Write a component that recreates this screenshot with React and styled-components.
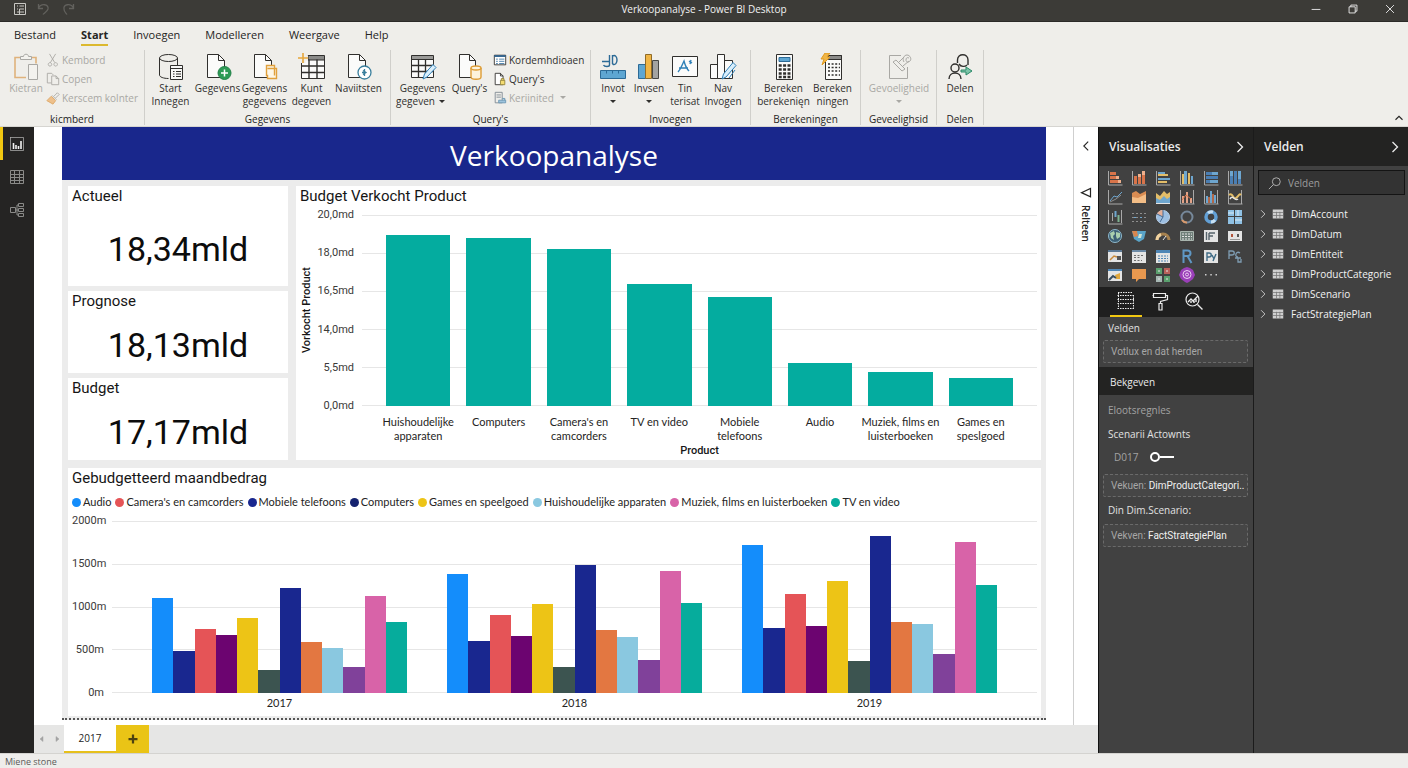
import React from "react";
import styled, { createGlobalStyle } from "styled-components";

const ui = `"Open Sans", "Noto Sans", sans-serif`;
const din = `Roboto, "Liberation Sans", sans-serif`;
const chartFont = `Lato, "Open Sans", sans-serif`;

const products = [
  { name: "Huishoudelijke apparaten", value: 89.7 },
  { name: "Computers", value: 87.9 },
  { name: "Camera's en camcorders", value: 82.1 },
  { name: "TV en video", value: 63.9 },
  { name: "Mobiele telefoons", value: 57.3 },
  { name: "Audio", value: 22.7 },
  { name: "Muziek, films en luisterboeken", value: 17.7 },
  { name: "Games en speslgoed", value: 14.5 },
];

const seriesColors = [
  "#148dfb",
  "#19278f",
  "#e55457",
  "#6c0470",
  "#edc416",
  "#3c5450",
  "#19278f",
  "#e37741",
  "#8ac8e0",
  "#80419a",
  "#d863a8",
  "#06ac9c",
];

const years = [
  {
    year: "2017",
    values: [55.5, 24.7, 37.2, 34, 43.6, 13.4, 60.8, 29.7, 26.2, 15.1, 56.4, 41],
  },
  {
    year: "2018",
    values: [69.2, 30.3, 45.4, 33.4, 51.8, 15.1, 74.4, 36.4, 32.3, 19.2, 71, 52.4],
  },
  {
    year: "2019",
    values: [85.8, 37.6, 57.6, 39, 64.9, 18.9, 91.3, 41.3, 40.4, 22.7, 87.8, 62.8],
  },
];

const legend = [
  { name: "Audio", color: "#148dfb" },
  { name: "Camera's en camcorders", color: "#e55457" },
  { name: "Mobiele telefoons", color: "#19278f" },
  { name: "Computers", color: "#14226f" },
  { name: "Games en speelgoed", color: "#edc416" },
  { name: "Huishoudelijke apparaten", color: "#8ac8e0" },
  { name: "Muziek, films en luisterboeken", color: "#d863a8" },
  { name: "TV en video", color: "#06ac9c" },
];

const tables = [
  "DimAccount",
  "DimDatum",
  "DimEntiteit",
  "DimProductCategorie",
  "DimScenario",
  "FactStrategiePlan",
];

/* ---------- icons ---------- */

const Icon = ({ size = 16, box = 16, children }) => (
  <svg
    width={size}
    height={size}
    viewBox={`0 0 ${box} ${box}`}
    fill="none"
    stroke="currentColor"
    aria-hidden="true"
  >
    {children}
  </svg>
);

const Chevron = ({ dir, size = 16 }) => (
  <Icon size={size}>
    <path
      strokeWidth="1.3"
      d={
        {
          left: "M10.5 3 5.5 8l5 5",
          right: "M5.5 3l5 5-5 5",
          up: "M4 10l4-4 4 4",
        }[dir]
      }
    />
  </Icon>
);

const ribbonIcons = {
  paste: (
    <>
      <path stroke="#dfb27c" strokeWidth="1.6" d="M8 4.500H3v20h11M20 4.500h4v6" />
      <path stroke="#a9a8a4" d="M8.500 6.500v-3h3c0-3 5-3 5 0h3v3zM16.500 11.500h9v15h-9z" fill="#f3f2ee" />
    </>
  ),
  database: (
    <>
      <path d="M2.500 5v17c0 2 4 3.500 9 3.500M20.500 5v7" />
      <ellipse cx="11.500" cy="5" rx="9" ry="3.500" />
      <path fill="#f8f8f6" d="M13.500 12.500h12v14h-12z" />
      <path d="M13.500 15.500h12M16 18.500h1.500M19 18.500h5M16 21h1.500M19 21h5M16 23.500h1.500M19 23.500h5" />
    </>
  ),
  pagePlus: (
    <>
      <path fill="#fbfbfa" d="M3.500 1.500h11l6 6v17h-17z" />
      <path d="M14.500 1.500v6h6" />
      <circle cx="20.500" cy="20" r="6.500" fill="#2d9a55" stroke="#23834a" />
      <path stroke="#fff" strokeWidth="1.500" d="M20.500 16.500v7M17 20h7" />
    </>
  ),
  pageCopy: (
    <>
      <path fill="#fbfbfa" d="M3.500 1.500h11l6 6v17h-17z" />
      <path d="M14.500 1.500v6h6" />
      <path stroke="#e0a03c" strokeWidth="1.400" fill="#fdf6e6" d="M15.500 12.500h8v3h2v10h-9v-3h-1zM16.500 15.500h7v7" />
    </>
  ),
  gridPlus: (
    <>
      <path fill="#fbfbfa" d="M3.500 6.500h23v19h-23z" />
      <path fill="#8b8b89" d="M10 2.500h16.500V7H10z" />
      <path d="M3.500 13h23M3.500 19.500h23M11 6.500v19M19 6.500v19" strokeWidth="1.400" />
      <path stroke="#f0eeea" strokeWidth="5" d="M5 0v10M0 5h10" />
      <path stroke="#e5a63b" strokeWidth="1.600" d="M5 0v10M0 5h10" />
    </>
  ),
  pageClock: (
    <>
      <path fill="#fbfbfa" d="M3.500 1.500h11l6 6v17h-17z" />
      <path d="M14.500 1.500v6h6" />
      <circle cx="19.500" cy="19.500" r="6.500" fill="#fff" stroke="#3a7f9d" strokeWidth="1.300" />
      <path stroke="#3a7f9d" strokeWidth="1.300" d="M19.500 16v7M17 19.500h4M18 17.500l3 2-3 2" />
    </>
  ),
  gridEdit: (
    <>
      <path fill="#fbfbfa" d="M2.500 3.500h22v21h-22z" />
      <path fill="#9a9a98" d="M2.500 2.500h22v4h-22z" />
      <path d="M2.500 12.500h22M2.500 18.500h22M9.500 6.500v18M16.500 6.500v18" strokeWidth="1.300" />
      <path fill="#d9eefb" stroke="#2f80b7" d="M14 26l1.500-5L24 11.500l3 3-9 9.500z" />
    </>
  ),
  pageDb: (
    <>
      <path fill="#fbfbfa" d="M3.500 1.500h10l6 6v17h-16z" />
      <path d="M13.500 1.500v6h6" />
      <path fill="#fdf3dc" stroke="#dd9c35" strokeWidth="1.400" d="M15 15v9c0 3 10 3 10 0v-9" />
      <ellipse cx="20" cy="15" rx="5" ry="2" fill="#fdf3dc" stroke="#dd9c35" strokeWidth="1.400" />
    </>
  ),
  textBar: (
    <>
      <path stroke="#2c6a96" strokeWidth="1.400" d="M3 8.500h7M10.500 2v10c0 2-5 2-6 0M13.500 2v9M13.500 3c6-3 6 11 0 8" />
      <path fill="#5ea6d2" stroke="#2c6a96" d="M1.500 17.500h25v8h-25z" />
      <path stroke="#2c6a96" d="M7.500 17.500v3M13.500 17.500v3M19.500 17.500v3" />
    </>
  ),
  columns: (
    <>
      <path fill="#5ea6d2" stroke="#2c6a96" d="M3.500 11.500h7v14h-7z" />
      <path fill="#f0b545" stroke="#8f6b28" d="M10.500 1.500h6v24h-6z" />
      <path fill="#a3a3a1" stroke="#474745" d="M17.500 7.500h6v18h-6z" />
    </>
  ),
  textBox: (
    <>
      <path fill="#fbfbfa" d="M1.500 3.500h25v20h-25z" />
      <path stroke="#2f80b7" strokeWidth="1.400" d="M7 19c3-3 4-7 6-11 1 4 2 7 5 10M8 15h9M18 8l3 2M20 7l-1 4" />
    </>
  ),
  shapes: (
    <>
      <path fill="#fbfbfa" d="M1.500 11.500h7v14h-7zM8.500 1.500h7v24h-7zM15.500 7.500h8v18h-8z" />
      <path fill="#d9eefb" stroke="#2f80b7" d="M13 26l1.500-5L24 9.500l3 3L17 24zM20 25l6-8" />
    </>
  ),
  calculator: (
    <>
      <path fill="#fbfbfa" d="M6.500 1.500h16v25h-16z" />
      <path fill="#5ea6d2" stroke="#2c6a96" d="M9 4.500h11v4H9z" />
      <path strokeWidth="2.400" strokeDasharray="3 1.400" d="M8.700 12.500h12M8.700 16.500h12M8.700 20.500h12M8.700 24h12" />
    </>
  ),
  calcFlash: (
    <>
      <path fill="#fbfbfa" d="M6.500 2.500h16v24h-16z" />
      <path fill="#8b8b89" d="M9.500 2.500h13v4h-13z" />
      <path strokeWidth="1.600" strokeDasharray="2 1.600" d="M9 11h12M9 14.500h12M9 18h12M9 22h12" />
      <path fill="#f0b545" stroke="#e09a20" d="M6 0h5L8 4h3L3 12l2-6H2z" />
    </>
  ),
  sensitivity: (
    <>
      <path d="M16 2.500H4.500v23h18V14" />
      <path d="M8 9l3-2 9 9-3 2zM11 12l5 5M19 9c-2-3 0-7 3-7s5 4 3 6-4 1-4-1 1-3 3-2M14 9l5-5M18 13l6-5" />
    </>
  ),
  share: (
    <>
      <path strokeWidth="1.400" d="M11.500 10V7c0-7 10.500-7 10.500 0v5M13 11c2 3 6 3 8 1" />
      <circle cx="9" cy="15" r="4" strokeWidth="1.400" />
      <path strokeWidth="1.400" d="M3 26c0-8 12-8 12 0" />
      <path stroke="#2b8a68" fill="#7cc3a8" d="M15 17h5v-3l6 4-6 4v-3h-5z" />
    </>
  ),
};

const smallIcons = {
  cut: <path d="M4 1l6 10M11 1L5 11M4.500 11a2 2 0 1 0 .1 0M11 11a2 2 0 1 0 .1 0" />,
  copy: (
    <path d="M6 12.500H1.500v-11h5l2 2M6.500 4.500h5l3 3v7h-8zM11.500 4.500v3h3" />
  ),
  brush: (
    <>
      <path stroke="#a9a8a4" d="M9 6l4-4 2 2-4 4M7 5l5 5" />
      <path fill="#eec08b" stroke="#dba767" d="M6 6l5 5-3 4-7-4z" />
    </>
  ),
  sheet: (
    <>
      <path fill="#fff" d="M1.500 2.500h13v11h-13z" />
      <path stroke="#2a5f8d" strokeWidth="2" d="M1.500 3.500h13" />
      <path stroke="#3f78a6" d="M3.500 7h2M7 7h6M3.500 9.500h2M7 9.500h6M3.500 12h2M7 12h6" />
    </>
  ),
  pageLock: (
    <>
      <path fill="#fff" d="M2.500 1.500h6l3 3v10h-9z" />
      <path d="M8.500 1.500v3h3" />
      <path fill="#f4dc71" stroke="#94833c" d="M8.500 9.500h5v5h-5zM9.500 9.500v-2h3v2" />
    </>
  ),
  link: (
    <>
      <path stroke="#7b8790" d="M2.500 1.500h8v12h-8zM4 4.500h5M4 7h5" />
      <path fill="#9ec4dd" stroke="#6996b4" d="M6.500 10.500h8v3h-8zM10.500 8.500h3v2" />
    </>
  ),
};

const O = "#d8744a";
const B = "#6ea6cf";
const G = "#a9a9a9";
const W = "#e4e4e4";
const Y = "#e3bd68";

const visuals = [
  [
    "Gestapeld staafdiagram",
    <><path stroke={G} d="M1.500 1v14h14" /><path stroke="none" fill={O} d="M3 2h6v3H3zM3 6h9v3H3zM3 10h11v3H3z" /><path stroke="none" fill="#efb08c" d="M9 6h3v3H9zM11 10h3v3h-3z" /></>,
  ],
  [
    "Gestapeld kolomdiagram",
    <><path stroke={G} d="M1.500 1v14h14" /><path stroke="none" fill={O} d="M3 6h3v8H3zM7 4h3v10H7zM11 1h3v13h-3z" /><path stroke="none" fill="#efb08c" d="M7 4h3v3H7zM11 1h3v4h-3z" /></>,
  ],
  [
    "Gegroepeerd staafdiagram",
    <><path stroke={G} d="M1.500 1v14h14" /><path stroke="none" fill={B} d="M3 2h7v2H3zM3 8h12v2H3z" /><path stroke="none" fill={Y} d="M3 4h10v2H3zM3 11h9v2H3z" /></>,
  ],
  [
    "Gegroepeerd kolomdiagram",
    <><path stroke={G} d="M1.500 1v14h14" /><path stroke="none" fill={Y} d="M3 4h2v10H3zM9 3h2v11H9z" /><path stroke="none" fill={B} d="M5 1h3v13H5zM12 6h2v8h-2z" /></>,
  ],
  [
    "100% gestapeld staafdiagram",
    <><path stroke={G} d="M1.500 1v14h14" /><path stroke="none" fill="#4b7fb4" d="M3 2h12v3H3zM3 6h12v3H3zM3 10h12v3H3z" /><path stroke="none" fill={B} d="M9 2h6v3H9zM7 10h8v3H7z" /></>,
  ],
  [
    "100% gestapeld kolomdiagram",
    <><path stroke={G} d="M1.500 1v14h14" /><path stroke="none" fill="#4b7fb4" d="M3 1h3v13H3zM7 1h3v13H7zM11 1h3v13h-3z" /><path stroke="none" fill={B} d="M3 1h3v5H3zM11 1h3v8h-3z" /></>,
  ],
  [
    "Lijndiagram",
    <><path stroke={G} d="M1.500 1v14h14" /><path stroke={B} d="M3 12l4-5 3 1 5-5" /><path stroke="#8e8e8e" d="M3 13l6-3 5-4" /></>,
  ],
  [
    "Vlakdiagram",
    <><path stroke="none" fill="#d98c52" d="M1 4l4-2 4 3 6-3v12H1z" /><path stroke="none" fill="#f3bd86" d="M1 8l6 1 8-4v9H1z" /></>,
  ],
  [
    "Gestapeld vlakdiagram",
    <><path stroke="none" fill={Y} d="M1 4l4 3 4-5 3 3 3-2v11H1z" /><path stroke="none" fill={B} d="M1 9l4 2 4-4 3 3 3-2v6H1z" /><path stroke={W} d="M1 14.500h14" /></>,
  ],
  [
    "Lijn- en gestapeld kolomdiagram",
    <><path stroke={G} d="M1.500 1v14h14M14.500 1v14" /><path stroke="#e3a388" strokeWidth="2" d="M4 14V7M8 14V3M12 14V9" /><path stroke={O} d="M3 11l4-5 5 4" /></>,
  ],
  [
    "Lijn- en gegroepeerd kolomdiagram",
    <><path stroke={G} d="M1.500 1v14h14M14.500 1v14" /><path stroke={B} strokeWidth="2" d="M4 14V7M8 14V2M12 14V6" /><path stroke={O} strokeWidth="1.500" d="M6 14V8M10 14V5" /></>,
  ],
  [
    "Lintdiagram",
    <><path stroke={G} d="M1.500 1v14h14M14.500 1v14" /><path stroke={Y} strokeWidth="2" d="M2 6c4-3 4 5 7 3s3-5 5-3" /><path stroke={W} strokeWidth="1.500" d="M3 10c3-5 5 3 8 0" /></>,
  ],
  [
    "Watervaldiagram",
    <><path stroke={G} d="M1.500 1v14h14M5.500 4v8M14.500 1v13" /><path stroke={B} strokeWidth="2" d="M8.500 2v6" /><path stroke="#7eb391" strokeWidth="2" d="M11.500 6v7" /></>,
  ],
  [
    "Spreidingsdiagram",
    <><path stroke="#8e8e8e" strokeDasharray="2 2" d="M1 4.500h14M1 8.500h14M1 12.500h14" /><path stroke={B} strokeDasharray="2 4" d="M3 8.500h12" /></>,
  ],
  [
    "Cirkeldiagram",
    <><circle cx="8" cy="8" r="6.500" fill="#9dbfe2" stroke="#bcd2ea" /><path stroke="none" fill="#e4b09a" d="M8 8L2 5a7 7 0 0 1 6-4z" /><path stroke="#476b93" d="M8 8L2 5M8 8v-7M8 8l-3 5" /></>,
  ],
  [
    "Ringdiagram",
    <><circle cx="8" cy="8" r="5.500" strokeWidth="2" stroke="#76889a" /><path stroke="#d99a6c" strokeWidth="2" d="M3 11a5.500 5.500 0 0 0 5 2.500" /></>,
  ],
  [
    "Treemap rond",
    <><circle cx="8" cy="8" r="5" strokeWidth="3.500" stroke="#62a0d6" /><path stroke="#c6dff2" strokeWidth="3" d="M5 4a5 5 0 0 1 5-1M12 11a5 5 0 0 1-4 2" /></>,
  ],
  [
    "Treemap",
    <><path stroke="none" fill="#8fc1e4" d="M1 1h6v6H1zM8 1h7v6H8zM1 8h6v7H1zM8 8h7v7H8z" /><path stroke="#d9ecf8" d="M1 4h6M11 1v6M8 11h7" /></>,
  ],
  [
    "Kaart",
    <><circle cx="8" cy="8" r="6.500" fill="#3c5f75" stroke="#8fb9cd" /><path stroke="none" fill="#a9cfae" d="M3 5l4-2 1 3-2 2 1 4-3-2zM9 4l4 1v4l-3 2-1-3z" /></>,
  ],
  [
    "Choropletenkaart",
    <><path stroke="none" fill="#5aa4c8" d="M1 3h14l-2 8-5 3-5-3z" /><path stroke="none" fill="#d8864e" d="M1 3h5l1 5-4 1z" /><path stroke="none" fill="#cfe5d5" d="M8 6h3l-1 4H7z" /></>,
  ],
  [
    "Trechter",
    <><path stroke="#a7824f" strokeWidth="3" d="M2 12a6 6 0 0 1 12 0" /><path stroke="#f1d3a0" strokeWidth="3" d="M2 12a6 6 0 0 1 4-5.500" /><path stroke={W} d="M8 12l3-4" /></>,
  ],
  [
    "Meter",
    <><path fill="#6f7f79" stroke="#a9b5ae" d="M1.500 3.500h13v9h-13z" /><path stroke={W} strokeDasharray="2 1" d="M3 6h10M3 8.500h10M3 11h10" /></>,
  ],
  [
    "Kaart met een rij",
    <><path stroke="none" fill={W} d="M1 2h14v12H1z" /><path stroke="#55636b" strokeWidth="1.400" d="M3.500 4v8M6 5h6M6 8h4M6 5v7" /></>,
  ],
  [
    "Kaart met meerdere rijen",
    <><path stroke="none" fill={W} d="M1 3h14v10H1z" /><path stroke="#b2543c" strokeWidth="2" d="M5 6v3" /><path stroke="#555" strokeWidth="2" d="M11 6v3" /><path stroke="#999" d="M3 11.500h10" /></>,
  ],
  [
    "KPI",
    <><path stroke="none" fill={W} d="M1 2h14v12H1z" /><path stroke="#5b7894" strokeWidth="2" d="M1 3h14" /><path stroke="#c98a3a" strokeWidth="1.500" d="M3 12l4-4 3 1" /><path stroke="none" fill="#555" d="M10 8h4v4h-4z" /></>,
  ],
  [
    "Slicer",
    <><path stroke="none" fill={W} d="M1 2h14v13H1z" /><path stroke="#6c8aa6" strokeWidth="2" d="M1 3h14" /><path stroke="#6c6c6c" strokeDasharray="2 1.500" d="M3 7.500h10M3 9.500h6M3 12.500h8" /></>,
  ],
  [
    "Tabel",
    <><path stroke="none" fill={W} d="M1 2h14v13H1z" /><path stroke="#4f86b6" strokeWidth="3" d="M1 3.500h14" /><path stroke="#4f86b6" strokeDasharray="2 1" d="M3 8h10M3 10.500h10M3 13h10" /></>,
  ],
  [
    "R-script",
    <path stroke="#5f97c4" strokeWidth="2" d="M4.500 15V2.500h4c4 0 4 5.500 0 5.500h-4M8.500 8l4 7" />,
  ],
  [
    "Python-script",
    <><path stroke="none" fill={W} d="M1 2h14v13H1z" /><path stroke="#3f6b85" strokeWidth="1.400" d="M4 13V5h2c3 0 3 4 0 4H4M9 7l2 4M13 6l-3 7" /></>,
  ],
  [
    "Belangrijkste beinvloeders",
    <><path stroke="#7f9db3" strokeWidth="1.300" d="M2 11V3h3c3 0 3 4 0 4H2M13 5c-4-3-6 4-2 4M8 10h6M11 10v4h3v-3" /></>,
  ],
  [
    "Uitsplitsingsstructuur",
    <><path stroke="none" fill={W} d="M1 2h14v12H1z" /><path stroke="#4f86b6" strokeWidth="2" d="M1 3h14" /><path stroke="none" fill="#e0a83e" d="M8 8l5-2v6H9z" /><path stroke="#384d5f" strokeWidth="2" d="M2 13l4-4 3 2" /></>,
  ],
  ["Q&A", <path stroke="none" fill="#e8984f" d="M1 2h14v10H8l-3 3v-3H1z" />],
  [
    "Apps",
    <><path stroke="none" fill="#5aa06e" d="M1 1h6v6H1zM9 9h6v6H9z" /><path stroke="none" fill="#b8605a" d="M9 1h6v6H9z" /><path stroke="none" fill="#a7b8b4" d="M1 9h6v6H1z" /><path stroke={W} d="M3 4h2M11 4h2M3 12h2M11 12h2" /></>,
  ],
  [
    "ArcGIS",
    <><path stroke="none" fill="#9a3fb8" d="M8 0l3 1 3 2 2 5-2 4-4 3-2 1-2-1-4-3-2-4 2-5 3-2z" /><circle cx="8" cy="7.500" r="4" stroke="#ecd2f3" /><circle cx="8" cy="7.500" r="1.500" stroke="#ecd2f3" /></>,
  ],
  [
    "Meer visuals",
    <path stroke="none" fill="#cfcfcf" d="M2 7h1.500v1.500H2zM7.300 7h1.500v1.500H7.300zM12.500 7H14v1.500h-1.500z" />,
  ],
];

/* ---------- styles ---------- */

const GlobalStyle = createGlobalStyle`
  * {
    box-sizing: border-box;
  }
  body {
    margin: 0;
    font-family: ${ui};
    font-size: 11px;
    color: #252423;
  }
  button, input {
    font: inherit;
    color: inherit;
  }
  button {
    padding: 0;
    border: 0;
    background: none;
  }
  svg {
    display: block;
    flex-shrink: 0;
  }
  h1, h2, p, ul {
    margin: 0;
    padding: 0;
    font-weight: 400;
  }
  ul {
    list-style: none;
  }
`;

const Shell = styled.div`
  display: flex;
  flex-direction: column;
  height: 100vh;
  min-height: 680px;
  background: #efeeea;
`;

const TitleBar = styled.header`
  display: grid;
  grid-template-columns: 1fr auto 1fr;
  align-items: center;
  height: 22px;
  padding-bottom: 4px;
  background: #3c3b37;
  border-bottom: 1px solid #2b2a27;
  color: #f2f2f2;
  font-size: 10px;
`;

const QuickAccess = styled.div`
  display: flex;
  gap: 8px;
  padding-left: 12px;
  color: #62615d;
  button:first-child {
    color: #c9c8c4;
  }
`;

const WindowButtons = styled.div`
  display: flex;
  justify-content: flex-end;
  button {
    display: flex;
    justify-content: center;
    width: 37px;
  }
`;

const Tabs = styled.nav`
  display: flex;
  gap: 25px;
  height: 26px;
  padding: 3px 0 0 14px;
`;

const Tab = styled.a`
  height: 21px;
  line-height: 19px;
  color: #252423;
  text-decoration: none;
  font-weight: ${(p) => (p.$active ? 700 : 400)};
  border-bottom: 2px solid ${(p) => (p.$active ? "#dcb92f" : "transparent")};
`;

const Ribbon = styled.div`
  display: flex;
  height: 79px;
  padding: 2px 0 1px;
  border-bottom: 1px solid #d6d5d1;
`;

const Group = styled.section`
  display: flex;
  flex-direction: column;
  justify-content: space-between;
  width: ${(p) => p.$width}px;
  border-right: 1px solid #d0cfcb;
`;

const GroupBody = styled.div`
  display: flex;
  padding-left: ${(p) => p.$inset}px;
`;

const GroupName = styled.p`
  font-size: 10px;
  line-height: 12px;
  text-align: center;
`;

const BigButton = styled.button`
  display: flex;
  flex-direction: column;
  align-items: center;
  width: ${(p) => p.$width}px;
  padding-top: 3px;
  font-size: 10px;
  line-height: 13px;
  white-space: nowrap;
  color: ${(p) => (p.disabled ? "#a9a8a4" : "#302f2d")};
  svg {
    margin-bottom: 1px;
  }
`;

const SmallButtons = styled.div`
  display: flex;
  flex-direction: column;
`;

const SmallButton = styled.button`
  display: flex;
  align-items: center;
  gap: 2px;
  height: 19px;
  font-size: 10px;
  white-space: nowrap;
  color: ${(p) => (p.disabled ? "#a9a8a4" : "#302f2d")};
`;

const Caret = styled.span`
  display: inline-block;
  margin: 2px 4px;
  border: 3px solid transparent;
  border-top-color: currentColor;
  border-bottom: 0;
`;

const CaretBelow = styled(Caret)`
  margin-top: 5px;
`;

const Collapse = styled.button`
  align-self: flex-end;
  margin-left: auto;
  padding-right: 2px;
`;

const Workspace = styled.div`
  display: flex;
  flex: 1;
  min-height: 0;
`;

const Rail = styled.nav`
  width: 34px;
  background: #252423;
`;

const RailButton = styled.button`
  display: flex;
  align-items: center;
  justify-content: center;
  width: 34px;
  height: 33px;
  color: ${(p) => (p.$active ? "#f2f2f2" : "#8a8a88")};
  box-shadow: inset ${(p) => (p.$active ? 3 : 0)}px 0 #f2c811;
`;

const Center = styled.div`
  display: flex;
  flex-direction: column;
  flex: 1;
  min-width: 0;
  border-right: 1px solid #111;
`;

const Canvas = styled.main`
  display: flex;
  flex: 1;
  min-height: 0;
  background: #fff;
`;

const Page = styled.div`
  display: flex;
  flex-direction: column;
  flex: 1;
  min-width: 0;
  margin: 0 27px 5px 28px;
  background: #ececec;
  border-bottom: 2px dotted #555;
`;

const PageTitle = styled.h1`
  height: 53px;
  line-height: 56px;
  font-size: 28px;
  text-align: center;
  color: #fff;
  background: #19278c;
`;

const PageBody = styled.div`
  display: flex;
  flex-direction: column;
  gap: 8px;
  flex: 1;
  min-height: 0;
  padding: 6px 5px 2px 6px;
`;

const TopRow = styled.div`
  display: grid;
  grid-template-columns: 220fr 745fr;
  gap: 8px;
  flex: 274;
  min-height: 0;
`;

const Kpis = styled.div`
  display: grid;
  grid-template-rows: 100fr 82fr 82fr;
  gap: 5px;
`;

const Card = styled.section`
  display: flex;
  flex-direction: column;
  flex: ${(p) => p.$grow || 1};
  min-height: 0;
  padding: 0 4px;
  background: #fff;
`;

const CardTitle = styled.h2`
  height: 20px;
  line-height: 20px;
  font-family: ${din};
  font-size: 15px;
  color: #161616;
`;

const KpiValue = styled.p`
  display: flex;
  align-items: center;
  justify-content: center;
  flex: 1;
  padding-top: 5px;
  font-family: ${din};
  font-size: 34px;
  line-height: 40px;
  color: #0c0c0c;
`;

const Chart = styled.div`
  display: grid;
  grid-template-columns: ${(p) => p.$columns};
  grid-template-rows: 1fr auto;
  flex: 1;
  min-height: 0;
  margin-top: ${(p) => p.$top}px;
  font-family: ${chartFont};
  font-size: 11px;
  line-height: 14px;
`;

const AxisTitle = styled.p`
  font-family: ${din};
  font-weight: 500;
  text-align: center;
  color: #161616;
`;

const VerticalTitle = styled(AxisTitle)`
  writing-mode: vertical-rl;
  transform: rotate(180deg);
`;

const Ticks = styled.div`
  display: flex;
  flex-direction: column;
  justify-content: space-between;
  margin: -7px 0;
  padding-right: 8px;
  font-family: ${din};
  text-align: right;
  color: #3b3a39;
`;

const Plot = styled.div`
  display: grid;
  grid-template-rows: 100%;
  min-height: 0;
`;

const GridLines = styled.div`
  display: flex;
  flex-direction: column;
  justify-content: space-between;
  grid-area: 1 / 1;
  span {
    height: 1px;
    background: #e6e6e6;
  }
`;

const Bars = styled.div`
  display: flex;
  grid-area: 1 / 1;
  padding: 0 ${(p) => p.$inset}px;
`;

const BarGroup = styled.div`
  display: flex;
  align-items: flex-end;
  flex: 1;
  padding: 0 ${(p) => p.$gap}px;
`;

const Bar = styled.div`
  flex: 1;
  background: ${(p) => p.$color};
`;

const Categories = styled.div`
  display: flex;
  grid-column: -2;
  padding: ${(p) => p.$top}px ${(p) => p.$inset}px 0;
  span {
    flex: 1;
    text-align: center;
  }
`;

const ProductAxis = styled(AxisTitle)`
  grid-column: 3;
  padding: 1px 0 2px;
`;

const YearLabels = styled(Categories)`
  margin-bottom: 6px;
`;

const Legend = styled.ul`
  display: flex;
  gap: 4px;
  margin-top: 6px;
  font-family: ${chartFont};
  font-size: 11px;
  line-height: 16px;
  white-space: nowrap;
  li {
    display: flex;
    align-items: center;
    gap: 2px;
  }
`;

const Dot = styled.i`
  width: 9px;
  height: 9px;
  border-radius: 50%;
  background: ${(p) => p.$color};
`;

const Filters = styled.aside`
  display: flex;
  flex-direction: column;
  align-items: center;
  width: 25px;
  padding-top: 12px;
  border-left: 1px solid #cfcfcf;
  svg:last-of-type {
    margin: 34px 0 6px;
  }
  span {
    writing-mode: vertical-rl;
    font-size: 10px;
    font-weight: 600;
    line-height: 16px;
  }
`;

const PageTabs = styled.div`
  display: flex;
  align-items: stretch;
  height: 28px;
  background: #e6e6e5;
`;

const PageArrows = styled.div`
  display: flex;
  align-items: center;
  justify-content: space-around;
  width: 30px;
  color: #a3a3a3;
`;

const PageTab = styled.button`
  width: 52px;
  font-size: 10px;
  background: #fff;
  border-bottom: 2px solid #e6c01c;
`;

const AddPage = styled.button`
  display: flex;
  align-items: center;
  justify-content: center;
  width: 33px;
  background: #eac416;
  color: #4c4210;
`;

const Pane = styled.aside`
  width: ${(p) => (p.$divider ? 155 : 154)}px;
  background: #414141;
  border-right: ${(p) => (p.$divider ? "1px solid #1b1b1b" : "0")};
  color: #ececec;
`;

const PaneHeader = styled.header`
  display: flex;
  align-items: center;
  justify-content: space-between;
  height: 39px;
  padding: 0 5px 0 10px;
  background: #232322;
  h2 {
    font-size: 12px;
    font-weight: 600;
  }
`;

const VisualGrid = styled.div`
  display: grid;
  grid-template-columns: repeat(6, 24px);
  grid-template-rows: repeat(6, 1fr);
  height: 121px;
  padding: 2px 0 2px 4px;
  button {
    display: flex;
    align-items: center;
    justify-content: center;
  }
`;

const PaneTabs = styled.div`
  display: flex;
  gap: 2px;
  height: 30px;
  padding-left: 11px;
  background: #1f1f1f;
`;

const PaneTab = styled.button`
  display: flex;
  align-items: center;
  justify-content: center;
  width: 32px;
  border-bottom: 2px solid ${(p) => (p.$active ? "#f2c811" : "transparent")};
`;

const Wells = styled.div`
  display: flex;
  flex-direction: column;
  padding: 0 5px 0 4px;
`;

const WellLabel = styled.p`
  padding-left: 5px;
  font-size: 10px;
  line-height: ${(p) => p.$line || 23}px;
  color: ${(p) => (p.$muted ? "#a3a3a3" : "#e2e2e2")};
`;

const Well = styled.button`
  height: 23px;
  padding: 0 2px 0 7px;
  border: 1px dashed #6a6a6a;
  border-radius: 2px;
  background: #464646;
  color: #a6a6a6;
  font-family: ${din};
  font-size: 10px;
  text-align: left;
  white-space: nowrap;
  b {
    font-weight: 400;
    color: #f0f0f0;
  }
`;

const Section = styled.h2`
  height: 28px;
  margin-top: 4px;
  padding-left: 11px;
  line-height: 30px;
  font-size: 10px;
  background: #232322;
`;

const SwitchRow = styled.label`
  display: flex;
  align-items: center;
  gap: 12px;
  height: 27px;
  margin-bottom: 4px;
  padding-left: 11px;
  font-size: 10px;
  color: #a3a3a3;
`;

const Switch = styled.input`
  appearance: none;
  display: flex;
  align-items: center;
  width: 24px;
  height: 10px;
  margin: 0;
  &::before {
    content: "";
    box-sizing: border-box;
    width: 10px;
    height: 10px;
    border: 2px solid #fff;
    border-radius: 50%;
  }
  &::after {
    content: "";
    flex: 1;
    height: 2px;
    background: #fff;
  }
`;

const Search = styled.label`
  display: flex;
  align-items: center;
  gap: 6px;
  height: 25px;
  margin: 4px 3px 9px 4px;
  padding-left: 9px;
  background: #333;
  border: 1px solid #141414;
  color: #bdbdbd;
  font-size: 10px;
  input {
    flex: 1;
    min-width: 0;
    padding: 0;
    border: 0;
    outline: 0;
    background: none;
    &::placeholder {
      color: #9d9d9d;
    }
  }
`;

const TableRow = styled.button`
  display: flex;
  align-items: center;
  width: 100%;
  height: 20px;
  padding-left: 3px;
  font-size: 10px;
  color: #f2f2f2;
  svg {
    color: #c4c4c4;
  }
  svg + svg {
    margin: 0 7px 0 3px;
  }
`;

const StatusBar = styled.footer`
  height: 15px;
  padding-left: 5px;
  border-top: 1px solid #d4d3d0;
  background: #eeedeb;
  font-size: 9px;
  line-height: 16px;
  color: #5a5a58;
`;

/* ---------- parts ---------- */

const Big = ({ icon, lines, width, caret, disabled }) => (
  <BigButton $width={width} disabled={disabled}>
    <Icon size={28} box={28}>
      {ribbonIcons[icon]}
    </Icon>
    {lines.map((line, i) => (
      <span key={i}>
        {line}
        {caret === "inline" && i === lines.length - 1 && <Caret />}
      </span>
    ))}
    {caret === "below" && <CaretBelow />}
  </BigButton>
);

const Small = ({ icon, text, caret, disabled }) => (
  <SmallButton disabled={disabled}>
    <Icon size={14}>{smallIcons[icon]}</Icon>
    {text}
    {caret && <Caret />}
  </SmallButton>
);

const RibbonGroup = ({ name, width, inset, children }) => (
  <Group $width={width}>
    <GroupBody $inset={inset}>{children}</GroupBody>
    <GroupName>{name}</GroupName>
  </Group>
);

const Kpi = ({ title, value }) => (
  <Card>
    <CardTitle>{title}</CardTitle>
    <KpiValue>{value}</KpiValue>
  </Card>
);

const Axis = ({ ticks }) => (
  <Ticks>
    {ticks.map((t) => (
      <span key={t}>{t}</span>
    ))}
  </Ticks>
);

const Lines = ({ count }) => (
  <GridLines>
    {Array.from({ length: count }, (_, i) => (
      <span key={i} />
    ))}
  </GridLines>
);

const ProductChart = () => (
  <Card>
    <CardTitle>Budget Verkocht Product</CardTitle>
    <Chart $columns="14px 48px 1fr" $top={9}>
      <VerticalTitle>Vorkocht Product</VerticalTitle>
      <Axis ticks={["20,0md", "18,0md", "16,5md", "14,0md", "5,5md", "0,0md"]} />
      <Plot>
        <Lines count={6} />
        <Bars $inset={16}>
          {products.map((p) => (
            <BarGroup key={p.name} $gap={8}>
              <Bar $color="#04ac9f" style={{ height: `${p.value}%` }} />
            </BarGroup>
          ))}
        </Bars>
      </Plot>
      <Categories $top={9} $inset={16}>
        {products.map((p) => (
          <span key={p.name}>{p.name}</span>
        ))}
      </Categories>
      <ProductAxis>Product</ProductAxis>
    </Chart>
  </Card>
);

const MonthChart = () => (
  <Card $grow={248}>
    <CardTitle>Gebudgetteerd maandbedrag</CardTitle>
    <Legend>
      {legend.map((l) => (
        <li key={l.name}>
          <Dot $color={l.color} />
          {l.name}
        </li>
      ))}
    </Legend>
    <Chart $columns="40px 1fr" $top={11}>
      <Axis ticks={["2000m", "1500m", "1000m", "500m", "0m"]} />
      <Plot>
        <Lines count={5} />
        <Bars $inset={20}>
          {years.map((y) => (
            <BarGroup key={y.year} $gap={20}>
              {y.values.map((v, i) => (
                <Bar key={i} $color={seriesColors[i]} style={{ height: `${v}%` }} />
              ))}
            </BarGroup>
          ))}
        </Bars>
      </Plot>
      <YearLabels $top={3} $inset={20}>
        {years.map((y) => (
          <span key={y.year}>{y.year}</span>
        ))}
      </YearLabels>
    </Chart>
  </Card>
);

const App = () => {
  return (
    <>
      <GlobalStyle />
      <Shell>
        <TitleBar>
          <QuickAccess>
            <button aria-label="Opslaan">
              <Icon>
                <path d="M2.500 2.500h11v11h-11zM5 5h1M7.500 5H12M5 8h1M7.500 8H12M5 11h7M7.500 8v5" />
              </Icon>
            </button>
            <button aria-label="Ongedaan maken">
              <Icon>
                <path strokeWidth="1.300" d="M2.500 3v4.500H7M2.500 7C5 2 13 3 12 8c-1 3-4 4-5 5.500" />
              </Icon>
            </button>
            <button aria-label="Opnieuw">
              <Icon>
                <path strokeWidth="1.300" d="M13.500 3v4.500H9M13.500 7C11 2 3 3 4 8c0 3 2 4 3 5.500" />
              </Icon>
            </button>
          </QuickAccess>
          <span>Verkoopanalyse - Power BI Desktop</span>
          <WindowButtons>
            <button aria-label="Minimaliseren">
              <Icon size={14}>
                <path d="M3 8.500h10" />
              </Icon>
            </button>
            <button aria-label="Herstellen">
              <Icon size={14}>
                <path d="M3.500 5.500h7v7h-7zM5.500 5.500v-2h7v7h-2" />
              </Icon>
            </button>
            <button aria-label="Sluiten">
              <Icon size={14}>
                <path d="M3.500 3.500l9 9M12.500 3.500l-9 9" />
              </Icon>
            </button>
          </WindowButtons>
        </TitleBar>

        <Tabs>
          <Tab href="#">Bestand</Tab>
          <Tab href="#" $active>
            Start
          </Tab>
          <Tab href="#">Invoegen</Tab>
          <Tab href="#">Modelleren</Tab>
          <Tab href="#">Weergave</Tab>
          <Tab href="#">Help</Tab>
        </Tabs>

        <Ribbon>
          <RibbonGroup name="kicmberd" width={145} inset={6}>
            <Big icon="paste" lines={["Kietran"]} width={40} disabled />
            <SmallButtons>
              <Small icon="cut" text="Kembord" disabled />
              <Small icon="copy" text="Copen" disabled />
              <Small icon="brush" text="Kerscem kolnter" disabled />
            </SmallButtons>
          </RibbonGroup>
          <RibbonGroup name="Gegevens" width={246} inset={2}>
            <Big icon="database" lines={["Start", "Innegen"]} width={47} />
            <Big icon="pagePlus" lines={["Gegevens"]} width={47} />
            <Big icon="pageCopy" lines={["Gegevens", "gegevens"]} width={47} />
            <Big icon="gridPlus" lines={["Kunt", "degeven"]} width={47} />
            <Big icon="pageClock" lines={["Naviitsten"]} width={47} />
          </RibbonGroup>
          <RibbonGroup name="Query's" width={200} inset={8}>
            <Big icon="gridEdit" lines={["Gegevens", "gegeven"]} width={47} caret="inline" />
            <Big icon="pageDb" lines={["Query's"]} width={47} />
            <SmallButtons>
              <Small icon="sheet" text="Kordemhdioaen" />
              <Small icon="pageLock" text="Query's" />
              <Small icon="link" text="Keriinited" caret disabled />
            </SmallButtons>
          </RibbonGroup>
          <RibbonGroup name="Invoegen" width={160} inset={4}>
            <Big icon="textBar" lines={["Invot"]} width={36} caret="below" />
            <Big icon="columns" lines={["Invsen"]} width={36} caret="below" />
            <Big icon="textBox" lines={["Tin", "terisat"]} width={36} />
            <Big icon="shapes" lines={["Nav", "Invogen"]} width={40} />
          </RibbonGroup>
          <RibbonGroup name="Berekeningen" width={110} inset={8}>
            <Big icon="calculator" lines={["Bereken", "berekenięn"]} width={49} />
            <Big icon="calcFlash" lines={["Bereken", "ningen"]} width={49} />
          </RibbonGroup>
          <RibbonGroup name="Geveelighsid" width={76} inset={8}>
            <Big icon="sensitivity" lines={["Gevoeligheid"]} width={60} caret="below" disabled />
          </RibbonGroup>
          <RibbonGroup name="Delen" width={47} inset={4}>
            <Big icon="share" lines={["Delen"]} width={38} />
          </RibbonGroup>
          <Collapse aria-label="Lint samenvouwen">
            <Chevron dir="up" size={14} />
          </Collapse>
        </Ribbon>

        <Workspace>
          <Rail>
            <RailButton $active aria-label="Rapport">
              <Icon>
                <path d="M1.500 1v13.500h13V1.500h-13" opacity="0.5" />
                <path strokeWidth="1.600" d="M4.500 13V7M7 13V9M9.500 13v-3M12 13V5" />
              </Icon>
            </RailButton>
            <RailButton aria-label="Gegevens">
              <Icon>
                <path d="M1.500 1.500h13v13h-13zM1.500 5.500h13M1.500 8.500h13M1.500 11.500h13M5.500 1.500v13M10.500 1.500v13" />
              </Icon>
            </RailButton>
            <RailButton aria-label="Model">
              <Icon>
                <path d="M1.500 5.500h5v5h-5zM9.500 1.500h5v3h-5zM9.500 6.500h5v3h-5zM9.500 11.500h5v3h-5zM6.500 8h3M8 3v10M8 3h1.500M8 13h1.500" />
              </Icon>
            </RailButton>
          </Rail>

          <Center>
            <Canvas>
              <Page>
                <PageTitle>Verkoopanalyse</PageTitle>
                <PageBody>
                  <TopRow>
                    <Kpis>
                      <Kpi title="Actueel" value="18,34mld" />
                      <Kpi title="Prognose" value="18,13mld" />
                      <Kpi title="Budget" value="17,17mld" />
                    </Kpis>
                    <ProductChart />
                  </TopRow>
                  <MonthChart />
                </PageBody>
              </Page>
              <Filters>
                <Chevron dir="left" size={14} />
                <Icon size={12}>
                  <path strokeWidth="1.600" d="M14 2v11L2 7.500z" />
                </Icon>
                <span>Relteen</span>
              </Filters>
            </Canvas>
            <PageTabs>
              <PageArrows>
                <Icon size={8}>
                  <path fill="currentColor" d="M10 3v10L4 8z" />
                </Icon>
                <Icon size={8}>
                  <path fill="currentColor" d="M6 3v10l6-5z" />
                </Icon>
              </PageArrows>
              <PageTab>2017</PageTab>
              <AddPage aria-label="Nieuwe pagina">
                <Icon size={12}>
                  <path strokeWidth="3" d="M8 2v12M2 8h12" />
                </Icon>
              </AddPage>
            </PageTabs>
          </Center>

          <Pane $divider>
            <PaneHeader>
              <h2>Visualisaties</h2>
              <Chevron dir="right" />
            </PaneHeader>
            <VisualGrid>
              {visuals.map(([name, art]) => (
                <button key={name} aria-label={name}>
                  <Icon>{art}</Icon>
                </button>
              ))}
            </VisualGrid>
            <PaneTabs>
              <PaneTab $active aria-label="Velden">
                <Icon size={20} box={20}>
                  <path strokeDasharray="1.500 1" d="M1.500 4.500h17M1.500 8.500h17M1.500 12.500h17M1.500 17.500h17M2.500 2v16M17.500 4v14M2 1.500h14" />
                </Icon>
              </PaneTab>
              <PaneTab aria-label="Opmaak">
                <Icon size={20} box={20}>
                  <path strokeWidth="1.200" d="M3.500 2.500h12v4h-12zM3.500 4.500h-1M15.500 4.500h2v4l-7 2v2M9 12.500h3v6.500H9z" />
                </Icon>
              </PaneTab>
              <PaneTab aria-label="Analyse">
                <Icon size={20} box={20}>
                  <circle cx="8.500" cy="8.500" r="6.500" strokeWidth="1.200" />
                  <path strokeWidth="1.400" d="M13.500 13.500l5 5M4 11l3-3 2 2 5-5M7 12V10M10 12v-2M12 11V8" />
                </Icon>
              </PaneTab>
            </PaneTabs>
            <Wells>
              <WellLabel>Velden</WellLabel>
              <Well>Votlux en dat herden</Well>
            </Wells>
            <Section>Bekgeven</Section>
            <Wells>
              <WellLabel $muted $line={30}>
                Elootsregnles
              </WellLabel>
              <WellLabel $line={18}>Scenarii Actownts</WellLabel>
              <SwitchRow>
                D017
                <Switch type="checkbox" />
              </SwitchRow>
              <Well>
                Vekuen: <b>DimProductCategori..</b>
              </Well>
              <WellLabel $line={27}>Din Dim.Scenario:</WellLabel>
              <Well>
                Vekven: <b>FactStrategiePlan</b>
              </Well>
            </Wells>
          </Pane>

          <Pane>
            <PaneHeader>
              <h2>Velden</h2>
              <Chevron dir="right" />
            </PaneHeader>
            <Search>
              <Icon size={14}>
                <circle cx="9.500" cy="6.500" r="4.500" />
                <path d="M6 10l-5 5" />
              </Icon>
              <input type="text" placeholder="Velden" aria-label="Zoeken" />
            </Search>
            {tables.map((name) => (
              <TableRow key={name}>
                <Chevron dir="right" size={12} />
                <Icon size={12}>
                  <path fill="#d0d0d0" stroke="none" d="M1 2h14v12H1z" />
                  <path stroke="#777" d="M1 6h14M1 10h14M6 5v9M10.500 5v9" />
                </Icon>
                {name}
              </TableRow>
            ))}
          </Pane>
        </Workspace>

        <StatusBar>Miene stone</StatusBar>
      </Shell>
    </>
  );
};

export default App;
